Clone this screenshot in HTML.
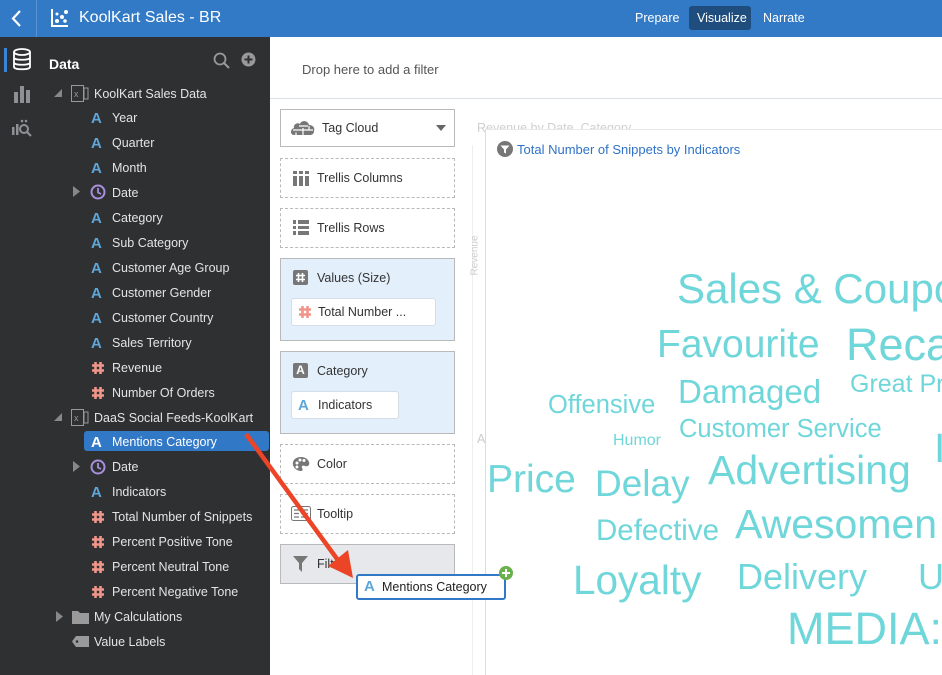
<!DOCTYPE html>
<html><head><meta charset="utf-8"><style>
*{box-sizing:border-box;margin:0;padding:0}
body{width:942px;height:675px;overflow:hidden;font-family:"Liberation Sans",sans-serif;background:#fff;position:relative}
.hdr{position:absolute;left:0;top:0;width:942px;height:37px;background:#3279c6}
.abs{position:absolute}
.side{position:absolute;left:0;top:37px;width:270px;height:638px;background:#2f3032}
.item{position:absolute;color:#e4e4e4;font-size:12.5px;white-space:nowrap}
.A{position:absolute;color:#5fa6d8;font-weight:bold;font-size:15px}
.H{position:absolute;width:12px;height:12px}
.box{position:absolute;left:280px;width:175px;border:1px dashed #b9b9b9;font-size:12.5px;color:#333}
.word{position:absolute;color:#6fd6da;white-space:nowrap;line-height:1}
</style></head><body>
<div class="hdr"></div>
<div class="abs" style="left:36px;top:0;width:1px;height:37px;background:#5a93d4"></div>
<svg class="abs" style="left:10px;top:9px" width="14" height="20"><path d="M10 2 L3 9.5 L10 17" stroke="#fff" stroke-width="2.2" fill="none"/></svg>
<svg class="abs" style="left:50px;top:8px" width="20" height="20"><path d="M2 1V18H18" stroke="#fff" stroke-width="2" fill="none"/><circle cx="7" cy="13" r="2" fill="#fff"/><circle cx="12" cy="9" r="2" fill="#fff"/><circle cx="16" cy="4" r="2" fill="#fff"/><circle cx="15" cy="13" r="1.8" fill="#fff"/><circle cx="7" cy="6" r="1.5" fill="#fff"/></svg>
<div class="abs" style="left:79px;top:9px;color:#fff;font-size:16px">KoolKart Sales - BR</div>
<div class="abs" style="left:635px;top:11px;color:#fff;font-size:12.5px">Prepare</div>
<div class="abs" style="left:689px;top:6px;width:62px;height:24px;background:#1f4d7e;border-radius:3px"></div>
<div class="abs" style="left:697px;top:11px;color:#fff;font-size:12.5px">Visualize</div>
<div class="abs" style="left:763px;top:11px;color:#fff;font-size:12.5px">Narrate</div>

<div class="side"></div>
<div class="abs" style="left:4px;top:48px;width:3px;height:24px;background:#3a86d6"></div>
<svg class="abs" style="left:12px;top:48px" width="20" height="24"><ellipse cx="10" cy="4" rx="8" ry="3" fill="none" stroke="#fff" stroke-width="1.8"/><path d="M2 4V19C2 22 18 22 18 19V4M2 9.5C2 12.5 18 12.5 18 9.5M2 14.5C2 17.5 18 17.5 18 14.5" fill="none" stroke="#fff" stroke-width="1.8"/></svg>
<svg class="abs" style="left:13px;top:86px" width="18" height="17"><rect x="1" y="6" width="4" height="11" fill="#8e9194"/><rect x="7" y="0" width="4" height="17" fill="#8e9194"/><rect x="13" y="4" width="4" height="13" fill="#8e9194"/></svg>
<svg class="abs" style="left:11px;top:119px" width="22" height="18"><rect x="1" y="8" width="2.5" height="8" fill="#8e9194"/><rect x="5" y="5" width="2.5" height="11" fill="#8e9194"/><circle cx="13" cy="10" r="4" fill="none" stroke="#8e9194" stroke-width="2"/><path d="M16 13L20 17" stroke="#8e9194" stroke-width="2"/><circle cx="11" cy="2" r="1.3" fill="#8e9194"/><circle cx="15" cy="2" r="1.3" fill="#8e9194"/></svg>
<div class="abs" style="left:49px;top:56px;color:#fff;font-size:14px;font-weight:bold">Data</div>
<svg class="abs" style="left:213px;top:52px" width="17" height="17"><circle cx="7" cy="7" r="5.5" fill="none" stroke="#999" stroke-width="1.8"/><path d="M11 11L16 16" stroke="#999" stroke-width="2"/></svg>
<svg class="abs" style="left:241px;top:52px" width="15" height="15"><circle cx="7.5" cy="7.5" r="7" fill="#999"/><path d="M7.5 3.5V11.5M3.5 7.5H11.5" stroke="#2f3032" stroke-width="2"/></svg>

<svg class="abs" style="left:54px;top:89px" width="9" height="9"><path d="M8 0V8H0Z" fill="#888"/></svg>
<svg class="abs" style="left:71px;top:85px" width="18" height="17"><rect x="0.5" y="0.5" width="12" height="16" fill="none" stroke="#999"/><rect x="13" y="3" width="4" height="11" fill="none" stroke="#999"/><text x="3" y="12" font-size="9" fill="#999" font-family="Liberation Sans">x</text></svg>
<div class="item" style="left:94px;top:87px">KoolKart Sales Data</div>
<svg class="abs" style="left:54px;top:413px" width="9" height="9"><path d="M8 0V8H0Z" fill="#888"/></svg>
<svg class="abs" style="left:71px;top:409px" width="18" height="17"><rect x="0.5" y="0.5" width="12" height="16" fill="none" stroke="#999"/><rect x="13" y="3" width="4" height="11" fill="none" stroke="#999"/><text x="3" y="12" font-size="9" fill="#999" font-family="Liberation Sans">x</text></svg>
<div class="item" style="left:94px;top:411px">DaaS Social Feeds-KoolKart</div>
<div class="abs" style="left:84px;top:431px;width:185px;height:20px;background:#3178c6;border-radius:3px"></div>

<div class="A" style="left:91px;top:110px">A</div><div class="item" style="left:112px;top:111px">Year</div>
<div class="A" style="left:91px;top:135px">A</div><div class="item" style="left:112px;top:136px">Quarter</div>
<div class="A" style="left:91px;top:160px">A</div><div class="item" style="left:112px;top:161px">Month</div>
<svg class="abs" style="left:73px;top:186px" width="8" height="11"><path d="M0 0L7 5.5L0 11Z" fill="#888"/></svg>
<svg class="abs" style="left:90px;top:184px" width="16" height="16"><circle cx="8" cy="8" r="6.5" fill="none" stroke="#a98fdc" stroke-width="2"/><path d="M8 4V8.5L11 10" stroke="#a98fdc" stroke-width="1.8" fill="none"/></svg>
<div class="item" style="left:112px;top:186px">Date</div>
<div class="A" style="left:91px;top:210px">A</div><div class="item" style="left:112px;top:211px">Category</div>
<div class="A" style="left:91px;top:235px">A</div><div class="item" style="left:112px;top:236px">Sub Category</div>
<div class="A" style="left:91px;top:260px">A</div><div class="item" style="left:112px;top:261px">Customer Age Group</div>
<div class="A" style="left:91px;top:285px">A</div><div class="item" style="left:112px;top:286px">Customer Gender</div>
<div class="A" style="left:91px;top:310px">A</div><div class="item" style="left:112px;top:311px">Customer Country</div>
<div class="A" style="left:91px;top:335px">A</div><div class="item" style="left:112px;top:336px">Sales Territory</div>
<svg class="H" style="left:92px;top:362px"><path d="M3.5 0V12M8.5 0V12M0 3.5H12M0 8.5H12" stroke="#f0958a" stroke-width="2.6"/></svg><div class="item" style="left:112px;top:361px">Revenue</div>
<svg class="H" style="left:92px;top:387px"><path d="M3.5 0V12M8.5 0V12M0 3.5H12M0 8.5H12" stroke="#f0958a" stroke-width="2.6"/></svg><div class="item" style="left:112px;top:386px">Number Of Orders</div>

<div class="A" style="left:91px;top:434px;color:#fff">A</div><div class="item" style="left:112px;top:435px;color:#fff">Mentions Category</div>
<svg class="abs" style="left:73px;top:461px" width="8" height="11"><path d="M0 0L7 5.5L0 11Z" fill="#888"/></svg>
<svg class="abs" style="left:90px;top:459px" width="16" height="16"><circle cx="8" cy="8" r="6.5" fill="none" stroke="#a98fdc" stroke-width="2"/><path d="M8 4V8.5L11 10" stroke="#a98fdc" stroke-width="1.8" fill="none"/></svg>
<div class="item" style="left:112px;top:460px">Date</div>
<div class="A" style="left:91px;top:484px">A</div><div class="item" style="left:112px;top:485px">Indicators</div>
<svg class="H" style="left:92px;top:511px"><path d="M3.5 0V12M8.5 0V12M0 3.5H12M0 8.5H12" stroke="#f0958a" stroke-width="2.6"/></svg><div class="item" style="left:112px;top:510px">Total Number of Snippets</div>
<svg class="H" style="left:92px;top:536px"><path d="M3.5 0V12M8.5 0V12M0 3.5H12M0 8.5H12" stroke="#f0958a" stroke-width="2.6"/></svg><div class="item" style="left:112px;top:535px">Percent Positive Tone</div>
<svg class="H" style="left:92px;top:561px"><path d="M3.5 0V12M8.5 0V12M0 3.5H12M0 8.5H12" stroke="#f0958a" stroke-width="2.6"/></svg><div class="item" style="left:112px;top:560px">Percent Neutral Tone</div>
<svg class="H" style="left:92px;top:586px"><path d="M3.5 0V12M8.5 0V12M0 3.5H12M0 8.5H12" stroke="#f0958a" stroke-width="2.6"/></svg><div class="item" style="left:112px;top:585px">Percent Negative Tone</div>
<svg class="abs" style="left:56px;top:611px" width="8" height="11"><path d="M0 0L7 5.5L0 11Z" fill="#888"/></svg>
<svg class="abs" style="left:72px;top:610px" width="17" height="14"><path d="M0 1H6L8 3H17V14H0Z" fill="#9a9a9a"/></svg>
<div class="item" style="left:94px;top:610px">My Calculations</div>
<svg class="abs" style="left:72px;top:636px" width="17" height="11"><path d="M0 5.5L4 0H17V11H4Z" fill="#9a9a9a"/><circle cx="5" cy="5.5" r="1.3" fill="#2f3032"/></svg>
<div class="item" style="left:94px;top:635px">Value Labels</div>

<div class="abs" style="left:302px;top:62px;color:#555;font-size:13px">Drop here to add a filter</div>
<div class="abs" style="left:270px;top:98px;width:672px;height:1px;background:#d9dee5"></div>

<div class="box" style="top:109px;height:38px;border:1px solid #b9b9b9"></div>
<svg class="abs" style="left:290px;top:118px" width="26" height="18"><path d="M4 17C0 17 0 11 4 10C3 6 8 4 10 6C11 2 18 2 19 7C23 7 25 10 24 13C24 16 22 17 20 17Z" fill="#777"/><path d="M3 12H23M9 8H18M6 14.5V17M13 10V17M19 8V12" stroke="#fff" stroke-width="1.2"/></svg>
<div class="abs" style="left:322px;top:121px;font-size:12.5px;color:#333">Tag Cloud</div>
<svg class="abs" style="left:436px;top:125px" width="10" height="6"><path d="M0 0H10L5 6Z" fill="#666"/></svg>

<div class="box" style="top:158px;height:40px"></div>
<svg class="abs" style="left:293px;top:171px" width="16" height="15"><g fill="#777"><rect x="0" y="0" width="4" height="3"/><rect x="6" y="0" width="4" height="3"/><rect x="12" y="0" width="4" height="3"/><rect x="0" y="5" width="4" height="10"/><rect x="6" y="5" width="4" height="10"/><rect x="12" y="5" width="4" height="10"/></g></svg>
<div class="abs" style="left:317px;top:171px;font-size:12.5px;color:#333">Trellis Columns</div>
<div class="box" style="top:208px;height:40px"></div>
<svg class="abs" style="left:293px;top:220px" width="16" height="15"><g fill="#777"><rect x="0" y="0" width="3" height="4"/><rect x="5" y="0" width="11" height="4"/><rect x="0" y="6" width="3" height="3"/><rect x="5" y="6" width="11" height="3"/><rect x="0" y="11" width="3" height="4"/><rect x="5" y="11" width="11" height="4"/></g></svg>
<div class="abs" style="left:317px;top:221px;font-size:12.5px;color:#333">Trellis Rows</div>

<div class="box" style="top:258px;height:83px;background:#e3effa;border:1px solid #b9b9b9"></div>
<svg class="abs" style="left:293px;top:270px" width="15" height="15"><rect width="15" height="15" rx="2" fill="#777"/><path d="M5.5 3V12M9.5 3V12M3 5.5H12M3 9.5H12" stroke="#fff" stroke-width="1.6"/></svg>
<div class="abs" style="left:317px;top:271px;font-size:12.5px;color:#333">Values (Size)</div>
<div class="abs" style="left:291px;top:298px;width:145px;height:28px;background:#fff;border:1px solid #d5dde6;border-radius:3px"></div>
<svg class="H" style="left:299px;top:306px"><path d="M3.5 0V12M8.5 0V12M0 3.5H12M0 8.5H12" stroke="#f0958a" stroke-width="2.6"/></svg>
<div class="abs" style="left:318px;top:305px;font-size:12.5px;color:#333">Total Number ...</div>

<div class="box" style="top:351px;height:83px;background:#e3effa;border:1px solid #b9b9b9"></div>
<div class="abs" style="left:293px;top:363px;width:15px;height:15px;background:#777;border-radius:2px;color:#fff;font-size:12px;font-weight:bold;text-align:center;line-height:15px">A</div>
<div class="abs" style="left:317px;top:364px;font-size:12.5px;color:#333">Category</div>
<div class="abs" style="left:291px;top:391px;width:108px;height:28px;background:#fff;border:1px solid #d5dde6;border-radius:3px"></div>
<div class="A" style="left:298px;top:397px">A</div>
<div class="abs" style="left:318px;top:398px;font-size:12.5px;color:#333">Indicators</div>

<div class="box" style="top:444px;height:40px"></div>
<svg class="abs" style="left:292px;top:456px" width="18" height="16"><path d="M9 1C3 1 0 5 1 9C2 13 6 15 9 15C11 15 11 13 10 12C9 10 11 9 13 10C16 11 18 9 17 6C16 3 13 1 9 1Z" fill="#777"/><circle cx="5" cy="7" r="1.5" fill="#fff"/><circle cx="8" cy="4" r="1.5" fill="#fff"/><circle cx="12" cy="4.5" r="1.5" fill="#fff"/><circle cx="5" cy="11" r="1.5" fill="#fff"/></svg>
<div class="abs" style="left:317px;top:457px;font-size:12.5px;color:#333">Color</div>
<div class="box" style="top:494px;height:40px"></div>
<svg class="abs" style="left:291px;top:506px" width="20" height="15"><rect x="0.5" y="0.5" width="19" height="14" rx="2" fill="none" stroke="#777"/><path d="M3 4H8M10 4H17M3 7.5H8M10 7.5H17M3 11H8M10 11H17" stroke="#777" stroke-width="1.3"/></svg>
<div class="abs" style="left:317px;top:507px;font-size:12.5px;color:#333">Tooltip</div>
<div class="box" style="top:544px;height:40px;background:#e6e8eb;border:1px solid #b9b9b9"></div>
<svg class="abs" style="left:293px;top:556px" width="15" height="16"><path d="M0 0H15L9 7V16L6 13V7Z" fill="#777"/></svg>
<div class="abs" style="left:317px;top:557px;font-size:12.5px;color:#333">Filter</div>

<div class="abs" style="left:477px;top:121px;color:#d0d0d0;font-size:12.5px">Revenue by Date, Category</div>
<div class="abs" style="left:472px;top:145px;width:1px;height:530px;background:#eee"></div>
<div class="abs" style="left:455px;top:250px;color:#ccc;font-size:10px;transform:rotate(-90deg)">Revenue</div>
<div class="abs" style="left:477px;top:432px;color:#ccc;font-size:12.5px">A</div>

<div class="abs" style="left:485px;top:129px;width:457px;height:546px;background:#fff;border-left:1px solid #d9dce0;border-top:1px solid #e6e8eb"></div>
<svg class="abs" style="left:497px;top:141px" width="16" height="16"><circle cx="8" cy="8" r="8" fill="#777"/><path d="M3.5 4.5H12.5L9 8.5V12.5L7 11.5V8.5Z" fill="#fff"/></svg>
<div class="abs" style="left:517px;top:142px;color:#2f72c8;font-size:13px">Total Number of Snippets by Indicators</div>

<div class="word" style="left:677px;top:268px;font-size:42px">Sales &amp; Coupo</div>
<div class="word" style="left:657px;top:325px;font-size:39px">Favourite</div>
<div class="word" style="left:846px;top:322px;font-size:45px">Reca</div>
<div class="word" style="left:678px;top:375px;font-size:33px">Damaged</div>
<div class="word" style="left:850px;top:372px;font-size:25px">Great Pr</div>
<div class="word" style="left:548px;top:393px;font-size:25.5px">Offensive</div>
<div class="word" style="left:613px;top:433px;font-size:16px">Humor</div>
<div class="word" style="left:679px;top:417px;font-size:25.5px">Customer Service</div>
<div class="word" style="left:487px;top:460px;font-size:39px">Price</div>
<div class="word" style="left:595px;top:465px;font-size:37px">Delay</div>
<div class="word" style="left:708px;top:450px;font-size:41px">Advertising</div>
<div class="word" style="left:934px;top:428px;font-size:41px">I</div>
<div class="word" style="left:596px;top:516px;font-size:29.5px">Defective</div>
<div class="word" style="left:735px;top:504px;font-size:41px">Awesomen</div>
<div class="word" style="left:573px;top:560px;font-size:40.5px">Loyalty</div>
<div class="word" style="left:737px;top:559px;font-size:36px">Delivery</div>
<div class="word" style="left:918px;top:559px;font-size:36px">U</div>
<div class="word" style="left:787px;top:606px;font-size:45px">MEDIA:</div>

<svg class="abs" style="left:240px;top:430px" width="120" height="150"><path d="M6 4L100 133" stroke="#ec4426" stroke-width="4.5"/><path d="M113 148L88 136L108 120Z" fill="#ec4426"/></svg>

<div class="abs" style="left:356px;top:574px;width:150px;height:26px;background:#fff;border:2px solid #3178c6;border-radius:3px"></div>
<div class="A" style="left:364px;top:578px">A</div>
<div class="abs" style="left:382px;top:580px;font-size:12.5px;color:#222">Mentions Category</div>
<svg class="abs" style="left:499px;top:566px" width="14" height="14"><circle cx="7" cy="7" r="7" fill="#6ab04c"/><path d="M7 3V11M3 7H11" stroke="#fff" stroke-width="2"/></svg>
</body></html>
